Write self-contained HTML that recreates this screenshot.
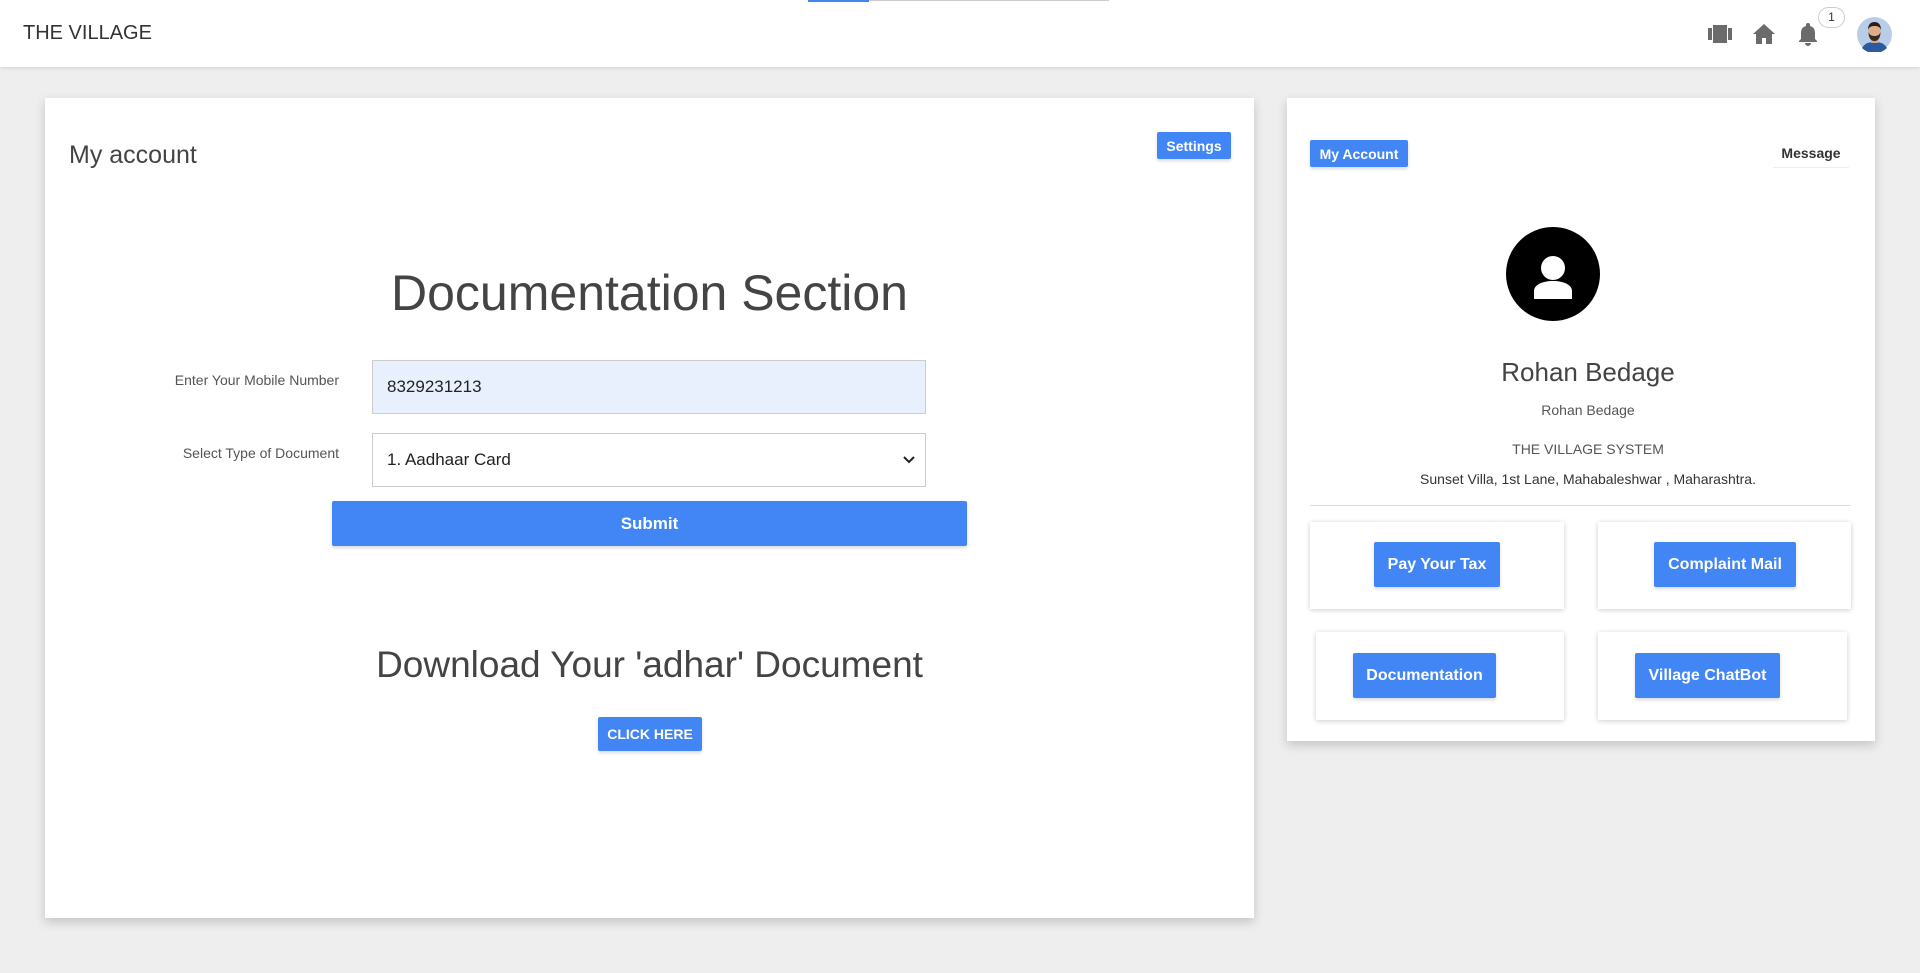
<!DOCTYPE html>
<html><head><meta charset="utf-8"><style>
*{box-sizing:border-box;margin:0;padding:0}
body{width:1920px;height:973px;background:#eeeeee;font-family:"Liberation Sans",Arial,sans-serif;position:relative;overflow:hidden;color:#333}
.abs{position:absolute}
.hdr{left:0;top:0;width:1920px;height:67px;background:#fff;box-shadow:0 1px 4px rgba(0,0,0,.12)}
.card{background:#fff;box-shadow:0 4px 10px rgba(0,0,0,.18)}
.btn{background:#4285f4;color:#fff;font-weight:bold;display:flex;align-items:center;justify-content:center;border-radius:2px;box-shadow:0 2px 3px rgba(0,0,0,.15)}
.lbl{font-size:14px;color:#555;text-align:right;width:300px}
.box{background:#fff;box-shadow:0 1px 5px rgba(0,0,0,.2)}
</style></head><body>
<div class="abs hdr"></div>
<div class="abs" style="left:808px;top:0;width:61px;height:2px;background:#4285f4"></div>
<div class="abs" style="left:869px;top:0;width:240px;height:1px;background:#ccc"></div>
<div class="abs" style="left:23px;top:22px;font-size:20px;color:#333">THE VILLAGE</div>
<svg class="abs" style="left:1708px;top:25px" width="24" height="18" viewBox="0 0 24 18"><rect x="0" y="3" width="4" height="12" fill="#6b6b6b"/><rect x="5" y="0" width="14" height="18" fill="#6b6b6b"/><rect x="20" y="3" width="4" height="12" fill="#6b6b6b"/></svg>
<svg class="abs" style="left:1752px;top:23px" width="24" height="22" viewBox="0 0 24 22"><path d="M12 1 1 11h3v10h6v-6h4v6h6V11h3z" fill="#6b6b6b"/></svg>
<svg class="abs" style="left:1797px;top:22px" width="22" height="24" viewBox="0 0 22 24"><path d="M11 1a2 2 0 0 0-2 2v1C5 5 4 8 4 11v6l-2 2v1h18v-1l-2-2v-6c0-3-1-6-5-7V3a2 2 0 0 0-2-2zM8 21a3 3 0 0 0 6 0z" fill="#6b6b6b"/></svg>
<div class="abs" style="left:1818px;top:7px;width:27px;height:21px;border:1px solid #ccc;border-radius:11px;background:#fff;font-size:12px;text-align:center;line-height:19px">1</div>
<svg class="abs" style="left:1857px;top:17px" width="35" height="35" viewBox="0 0 35 35"><circle cx="17.5" cy="17.5" r="17.5" fill="#b9cde8"/><path d="M5 31c3-5 7-6 12.5-6S27 26 30 31a17.5 17.5 0 0 1-25 0z" fill="#2c5aa0"/><rect x="14" y="19" width="7" height="7" fill="#d9a77e"/><ellipse cx="17.5" cy="15" rx="6" ry="7.5" fill="#e0ad85"/><path d="M11.5 15c0 6 2.5 9 6 9s6-3 6-9c-1 3-3 4-6 4s-5-1-6-4z" fill="#3a2a20"/><path d="M11 13c0-6 3-8 6.5-8s6.5 2 6.5 8c-1-3-3-4-6.5-4S12 10 11 13z" fill="#2a1e18"/></svg>

<div class="abs card" style="left:45px;top:98px;width:1209px;height:820px"></div>
<div class="abs" style="left:69px;top:141px;font-size:25px;color:#444">My account</div>
<div class="abs btn" style="left:1157px;top:132px;width:74px;height:27px;font-size:14px">Settings</div>
<div class="abs" style="left:45px;top:264px;width:1209px;text-align:center;font-size:50px;color:#444">Documentation Section</div>
<div class="abs lbl" style="left:39px;top:372px">Enter Your Mobile Number</div>
<div class="abs" style="left:372px;top:360px;width:554px;height:54px;background:#e8f0fe;border:1px solid #ccc;font-size:17px;color:#222;padding:16px 14px">8329231213</div>
<div class="abs lbl" style="left:39px;top:445px">Select Type of Document</div>
<div class="abs" style="left:372px;top:433px;width:554px;height:54px;background:#fff;border:1px solid #ccc;font-size:17px;color:#222;padding:16px 14px">1. Aadhaar Card<svg style="position:absolute;right:10px;top:22px" width="12" height="8" viewBox="0 0 12 8"><path d="M1 1l5 5 5-5" stroke="#222" stroke-width="2" fill="none"/></svg></div>
<div class="abs btn" style="left:332px;top:501px;width:635px;height:45px;font-size:17px">Submit</div>
<div class="abs" style="left:45px;top:644px;width:1209px;text-align:center;font-size:37px;color:#444">Download Your 'adhar' Document</div>
<div class="abs btn" style="left:598px;top:717px;width:104px;height:34px;font-size:14px">CLICK HERE</div>

<div class="abs card" style="left:1287px;top:98px;width:588px;height:643px"></div>
<div class="abs btn" style="left:1310px;top:140px;width:98px;height:27px;font-size:14px">My Account</div>
<div class="abs" style="left:1773px;top:145px;width:76px;height:23px;font-size:14px;font-weight:bold;color:#333;text-align:center;border-bottom:1px solid #eee">Message</div>
<svg class="abs" style="left:1506px;top:227px" width="94" height="94" viewBox="0 0 94 94"><circle cx="47" cy="47" r="47" fill="#000"/><circle cx="47" cy="41" r="12" fill="#fff"/><path d="M28 72v-8c0-6 8-10 19-10s19 4 19 10v8z" fill="#fff"/></svg>
<div class="abs" style="left:1294px;top:357px;width:588px;text-align:center;font-size:26px;color:#444">Rohan Bedage</div>
<div class="abs" style="left:1294px;top:402px;width:588px;text-align:center;font-size:14px;color:#555">Rohan Bedage</div>
<div class="abs" style="left:1294px;top:441px;width:588px;text-align:center;font-size:14px;color:#555">THE VILLAGE SYSTEM</div>
<div class="abs" style="left:1294px;top:471px;width:588px;text-align:center;font-size:14px;color:#333">Sunset Villa, 1st Lane, Mahabaleshwar , Maharashtra.</div>
<div class="abs" style="left:1310px;top:505px;width:541px;height:1px;background:#ddd"></div>
<div class="abs box" style="left:1310px;top:522px;width:254px;height:87px"></div>
<div class="abs box" style="left:1598px;top:522px;width:253px;height:87px"></div>
<div class="abs box" style="left:1316px;top:632px;width:248px;height:88px"></div>
<div class="abs box" style="left:1598px;top:632px;width:249px;height:88px"></div>
<div class="abs btn" style="left:1374px;top:542px;width:126px;height:45px;font-size:16px">Pay Your Tax</div>
<div class="abs btn" style="left:1654px;top:542px;width:142px;height:45px;font-size:16px">Complaint Mail</div>
<div class="abs btn" style="left:1353px;top:653px;width:143px;height:45px;font-size:16px">Documentation</div>
<div class="abs btn" style="left:1635px;top:653px;width:145px;height:45px;font-size:16px">Village ChatBot</div>
</body></html>
